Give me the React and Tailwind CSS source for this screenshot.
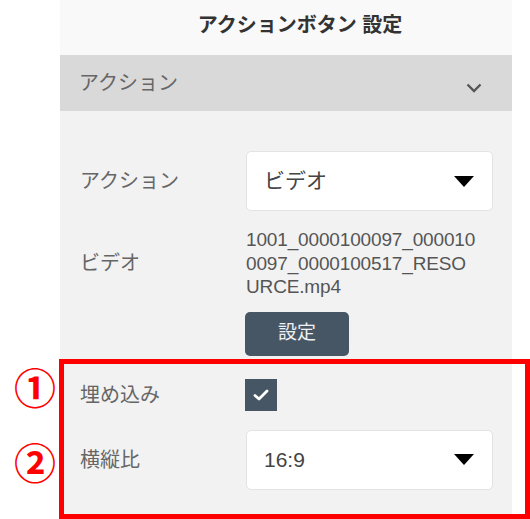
import React from "react";

const font = { fontFamily: '"Liberation Sans", "Noto Sans CJK JP", sans-serif' };

function Triangle() {
  return (
    <svg width="20" height="11" viewBox="0 0 20 11" className="shrink-0">
      <path d="M0 0 H20 L10 11 Z" fill="#000" />
    </svg>
  );
}

function Select({ value }) {
  return (
    <div className="flex h-[60px] w-[247px] items-center justify-between rounded-[5px] border border-[#e3e3e3] bg-white pl-[17px] pr-[18px]">
      <span className="text-[21px] text-[#444]">{value}</span>
      <Triangle />
    </div>
  );
}

export default function App() {
  return (
    <div className="relative h-[519px] w-[530px] overflow-hidden bg-white" style={font}>
      <div className="ml-[60px] flex h-full w-[452px] flex-col">
        <div className="flex h-[55px] items-center justify-center bg-[#f9f9f9] pb-[5px] pl-[28px] text-[20px] font-bold text-[#333]">
          アクションボタン 設定
        </div>
        <div className="flex h-[56px] items-center justify-between bg-[#d9d9d9] pl-[19px] pr-[30px]">
          <span className="text-[20px] text-[#666]">アクション</span>
          <svg width="16" height="10" viewBox="0 0 16 10" className="mt-[10px]">
            <path d="M1.5 1.5 L8 8 L14.5 1.5" fill="none" stroke="#555" strokeWidth="2.4" />
          </svg>
        </div>
        <div className="flex-1 bg-[#f2f2f2] pl-[20px] pt-[40px]">
          <div className="flex items-center">
            <div className="w-[166px] text-[20px] text-[#666]">アクション</div>
            <Select value="ビデオ" />
          </div>
          <div className="mt-[17px] flex items-center">
            <div className="w-[166px] text-[20px] text-[#666]">ビデオ</div>
            <div className="text-[19px] leading-[23.5px] tracking-[-0.15px] text-[#555]">
              <div>1001_0000100097_000010</div>
              <div>0097_0000100517_RESO</div>
              <div>URCE.mp4</div>
            </div>
          </div>
          <div className="mt-[13px] flex">
            <div className="w-[165px]" />
            <button className="flex h-[44px] w-[104px] items-center justify-center rounded-[5px] bg-[#465665] text-[19px] text-[#eef0f2]">
              設定
            </button>
          </div>
          <div className="mt-[23px] flex items-center">
            <div className="w-[165px] text-[20px] text-[#666]">埋め込み</div>
            <div className="flex h-[32px] w-[32px] items-center justify-center bg-[#465665]">
              <svg width="16" height="12" viewBox="0 0 16 12">
                <path d="M2 6.5 L6 10 L14 2" fill="none" stroke="#fff" strokeWidth="2.8" strokeLinecap="round" strokeLinejoin="round" />
              </svg>
            </div>
          </div>
          <div className="mt-[19px] flex items-center">
            <div className="w-[166px] text-[20px] text-[#666]">横縦比</div>
            <Select value="16:9" />
          </div>
        </div>
      </div>

      <div className="absolute left-[59px] top-[359px] h-[160px] w-[471px] border-[5px] border-[#ff0000]" />
      <div className="absolute left-[14px] top-[361px] text-[42px] font-semibold leading-[50px] text-[#ff0000]" style={{ fontFamily: '"Noto Sans CJK JP", sans-serif' }}>
        ①
      </div>
      <div className="absolute left-[14px] top-[436px] text-[42px] font-semibold leading-[50px] text-[#ff0000]" style={{ fontFamily: '"Noto Sans CJK JP", sans-serif' }}>
        ②
      </div>
    </div>
  );
}
